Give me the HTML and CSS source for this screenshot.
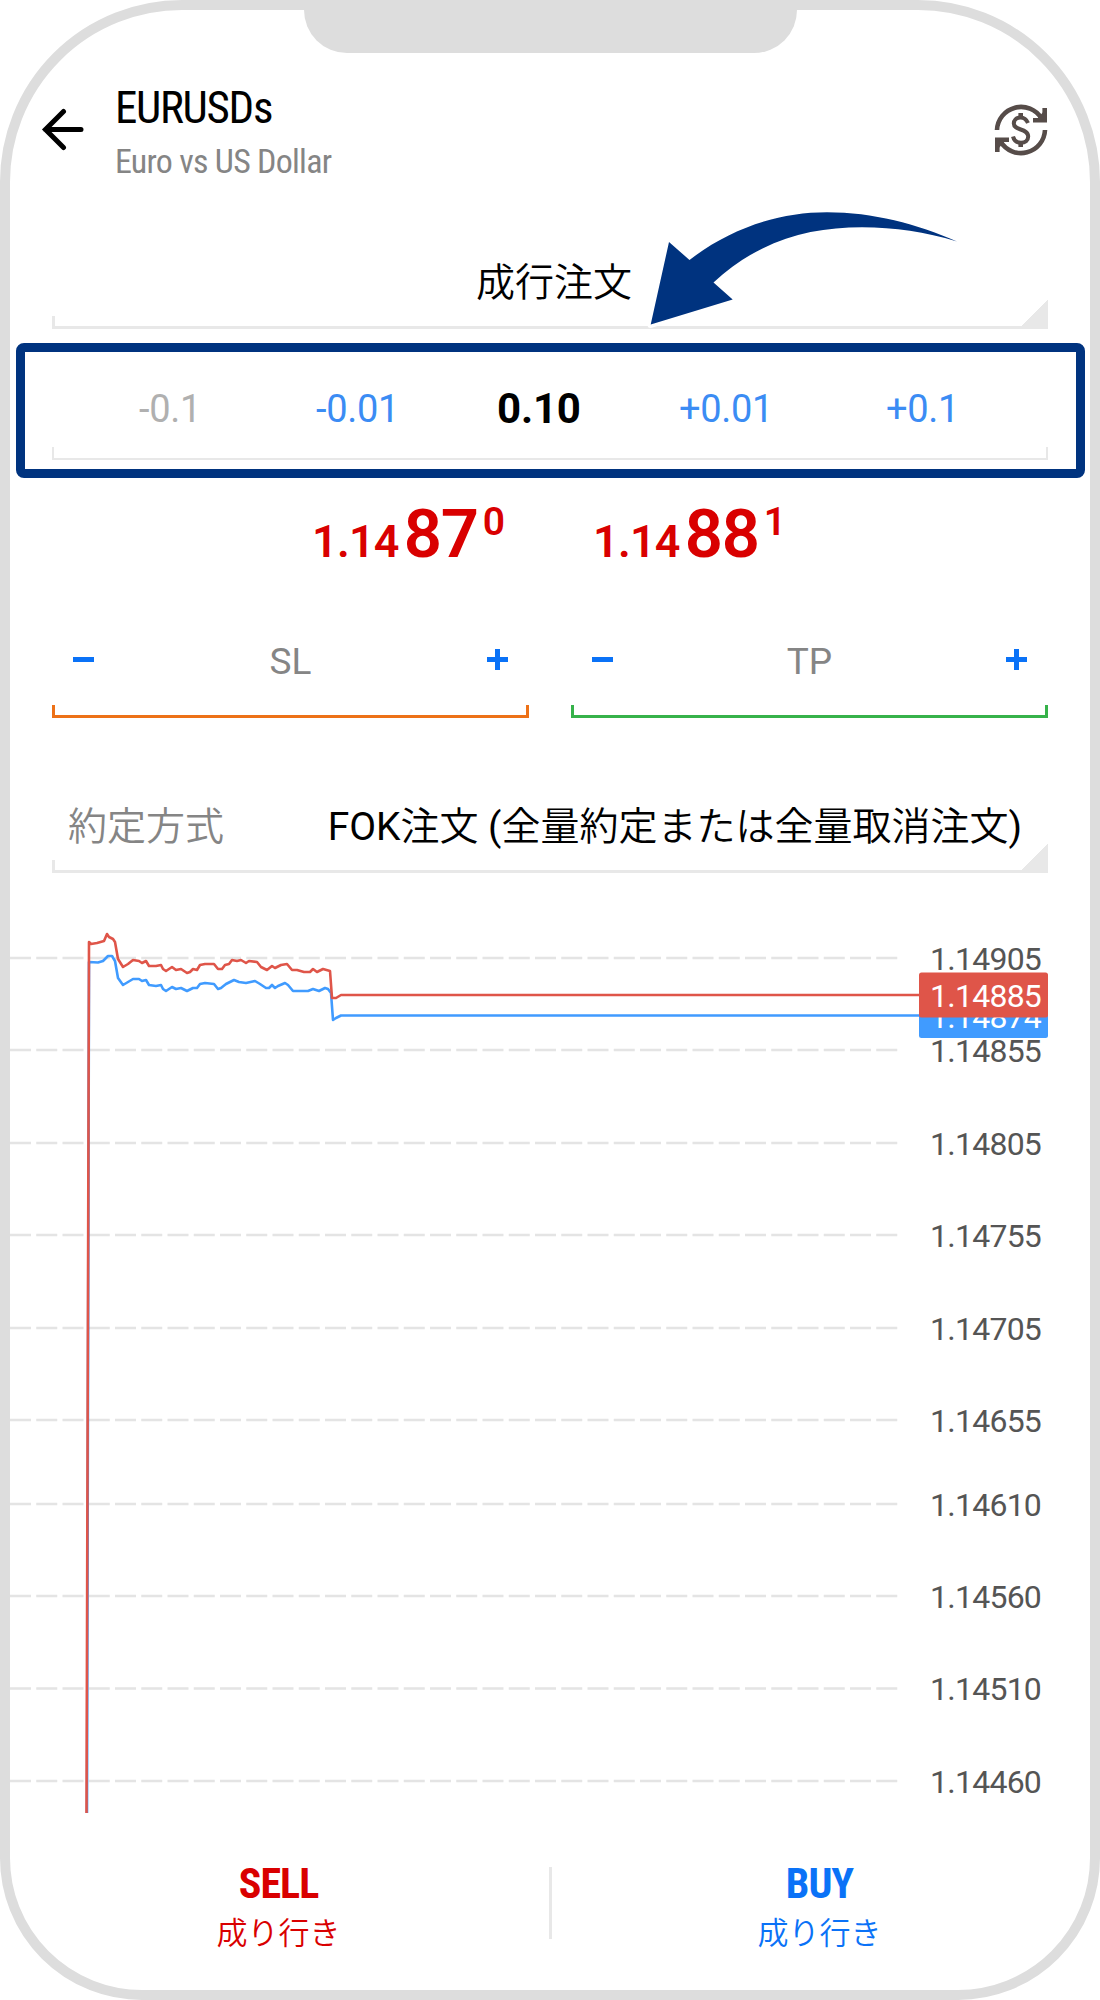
FILE: index.html
```html
<!DOCTYPE html>
<html lang="ja">
<head>
    <meta charset="UTF-8">
    <title>EURUSDs</title>
    <link rel="stylesheet" href="styles.css">
</head>
<body>
<div class="phone">
    <div class="notch"></div>

    <header class="header">
        <svg class="back" width="44" height="44" viewBox="0 0 44 44">
            <path d="M22.500 3.500 L4.500 21.500 L22.500 39.500 M4.500 21.500 H40" fill="none" stroke="#000" stroke-width="5" stroke-linecap="round"/>
        </svg>
        <div class="symbol">
            <h1>EURUSDs</h1>
            <p>Euro vs US Dollar</p>
        </div>
        <svg class="exchange" width="54" height="54" viewBox="0 0 54 54" fill="none" stroke="#564c49" stroke-width="4.6">
            <path d="M3 27 A24 24 0 0 1 47.5 15.5"/>
            <path d="M51 27 A24 24 0 0 1 6.5 38.500"/>
            <path d="M50.700 5 V17.300 H39" />
            <path d="M3.300 49 V36.700 H15"/>
            <path d="M43 16 L50 8 V17z M11 38 L4 46 V37z" fill="#564c49" stroke="none"/>
            <path d="M34 20 C32 15.500 29.500 14.500 26.500 14.500 C22 14.500 19.800 17.500 19.800 20.500 C19.800 28 34.200 25 34.200 33.500 C34.200 37.500 31 39.700 27 39.700 C23 39.700 20 37.500 19 33.500" stroke-width="4"/>
            <path d="M26.700 10 V15 M26.700 39 V44"/>
        </svg>
    </header>

    <div class="field select order-type">
        <span>成行注文</span>
    </div>

    <div class="volume">
        <div class="volume-row">
            <span class="step disabled">-0.1</span>
            <span class="step">-0.01</span>
            <span class="value">0.10</span>
            <span class="step">+0.01</span>
            <span class="step">+0.1</span>
        </div>
    </div>

    <div class="prices">
        <div class="price">1.14<b>87</b><sup>0</sup></div>
        <div class="price">1.14<b>88</b><sup>1</sup></div>
    </div>

    <div class="levels">
        <div class="level sl"><i class="minus"></i><span>SL</span><i class="plus"></i></div>
        <div class="level tp"><i class="minus"></i><span>TP</span><i class="plus"></i></div>
    </div>

    <div class="field select filling">
        <span class="label">約定方式</span>
        <span><span class="latin">FOK</span>注文 <span class="latin">(</span>全量約定または全量取消注文<span class="latin">)</span></span>
    </div>

    <svg class="chart" width="1080" height="940" viewBox="10 880 1080 940">
        <g class="grid">
            <path d="M10 958H898M10 1050H898M10 1143H898M10 1235H898M10 1328H898M10 1420H898"/>
            <path d="M10 1504H898M10 1596H898M10 1688.500H898M10 1781H898"/>
        </g>
        <g class="scale">
            <text x="930" y="970">1.14905</text>
            <text x="930" y="1062">1.14855</text>
            <text x="930" y="1155">1.14805</text>
            <text x="930" y="1247">1.14755</text>
            <text x="930" y="1340">1.14705</text>
            <text x="930" y="1432">1.14655</text>
            <text x="930" y="1516">1.14610</text>
            <text x="930" y="1608">1.14560</text>
            <text x="930" y="1700">1.14510</text>
            <text x="930" y="1793">1.14460</text>
        </g>
        <polyline class="line bid" points="87,1813 89,962 98,962.500 103,961 108,956 112,956 115,961 118,978 123,985 128,982 133,979 139,979 142,981 146,980 149,985 156,986 161,985 163,989 166,991 169,989 172,987 176,989 181,988 187,991 193,988 197,988 200,984 205,983 214,984 218,989 221,988 226,984 234,980 239,982 246,983 255,981 260,984 266,988 269,988 272,985 275,988 278,986 285,983 288,985 293,991 308,991 313,989 319,991 325,988 328,989 331,993 333,1020 336,1018 341,1015.500 920,1015.500"/>
        <polyline class="line ask" points="86.500,1813 89,942 91,944 97,943 104,941 107,934 109,937 113,939 115,942 118,959 123,967 128,964 133,960 139,961 142,963 146,961 149,966 156,966 161,965 163,969 166,971 172,967 176,970 181,969 187,973 190,972 193,969 197,970 200,965 205,964 214,964 218,969 222,969 225,965 229,964 232,960 237,961 241,960 246,963 249,961 257,962 261,967 267,970 272,966 275,968 281,965 287,964 292,970 297,970 304,972 310,972 313,969 317,972 323,969 330,971 332,998 336,998 341,995 920,995"/>
        <rect x="919" y="993" width="129" height="45" rx="2.500" fill="#409bff"/>
        <text class="tag" x="930" y="1027.500">1.14874</text>
        <rect x="919" y="972.500" width="129" height="45" rx="2.500" fill="#df5549"/>
        <text class="tag" x="930" y="1007">1.14885</text>
    </svg>

    <footer class="actions">
        <div class="action sell"><b>SELL</b><span>成り行き</span></div>
        <div class="action buy"><b>BUY</b><span>成り行き</span></div>
    </footer>

    <!-- pointer to the volume row -->
    <svg class="pointer" width="330" height="130" viewBox="640 205 330 130">
        <path d="M650.700 324.500 L669 242 L689.500 260 C732 227 780 212.300 827 212.300 C873 212.300 917 224 957 241.500 C925 232 895 227.300 862 227.300 C808 227.300 758 241 713.500 282.500 L732.700 299.500 Z" fill="#00337f" stroke="#fff" stroke-width="7" stroke-linejoin="round" paint-order="stroke"/>
    </svg>
</div>
</body>
</html>
```
FILE: styles.css
```css
* {
    box-sizing: border-box;
}

body {
    margin: 0;
    background: #fff;
    font-family: Roboto, "Noto Sans CJK JP", sans-serif;
}

.phone {
    position: relative;
    display: flex;
    flex-direction: column;
    width: 1100px;
    height: 2000px;
    border: 10px solid #ddd;
    border-radius: 182px 182px 142px 142px;
    background: #fff;
    overflow: hidden;
}

.notch {
    flex: none;
    width: 493px;
    height: 43px;
    margin: 0 auto;
    background: #ddd;
    border-radius: 0 0 46px 46px;
}

.header {
    display: flex;
    align-items: center;
    height: 154px;
    padding: 0 42px 0 31px;
}

.symbol {
    flex: 1;
    margin-left: 30px;
    padding-top: 8px;
    font-family: "Roboto Condensed", Roboto, sans-serif;
    font-stretch: 75%;
}

.symbol h1 {
    margin: 0;
    font-size: 45px;
    font-weight: 400;
    letter-spacing: -1.3px;
    line-height: 54px;
}

.symbol p {
    margin: 0;
    color: #858585;
    font-size: 34px;
    letter-spacing: -0.75px;
    line-height: 53px;
}

.field {
    display: flex;
    justify-content: center;
    position: relative;
    height: 73px;
    margin: 0 42px;
    font-size: 39px;
    font-weight: 350;
    line-height: 56px;
    white-space: nowrap;
}

/* bracket under a field: bottom line with short side ticks */
.field::before,
.volume-row::before,
.level::before {
    content: "";
    position: absolute;
    left: 0;
    right: 0;
    bottom: 0;
    height: 10px;
    border: 3px solid #e8e8e8;
    border-top: 0;
}

.select::after {
    content: "";
    position: absolute;
    right: 0;
    bottom: 0;
    width: 29px;
    height: 29px;
    background: linear-gradient(135deg, transparent 50%, #e8e8e8 50%);
}

.order-type {
    margin-top: 39px;
    padding-left: 8px;
}

.order-type.field {
    height: 83px;
    line-height: 74px;
}

.volume {
    flex: none;
    height: 135px;
    margin: 14px 5px 0 6px;
    padding: 0 28px 0 27px;
    border: 9px solid #00337f;
    border-radius: 8px;
}

.volume-row {
    position: relative;
    display: grid;
    grid-template-columns: 177px 181px 182px 207px 1fr;
    align-items: center;
    height: 108px;
    padding: 5px 0 0 87px;
}

.volume-row::before {
    height: 11px;
    border-width: 2px;
    border-top: 0;
}

.step {
    color: #3b8cf4;
    font-size: 38px;
    letter-spacing: -0.3px;
}

.disabled {
    color: #b0b0b0;
}

.value {
    font-size: 42px;
    font-weight: 700;
    letter-spacing: -0.2px;
}

.prices {
    display: flex;
    gap: 86px;
    height: 98px;
    padding-left: 302px;
    color: #d90000;
}

.price {
    width: 195px;
    font-size: 45px;
    font-weight: 650;
    letter-spacing: -0.8px;
    line-height: 112px;
    white-space: nowrap;
}

.price b {
    margin-left: 5px;
    font-size: 67px;
    font-weight: 650;
    letter-spacing: -1.3px;
}

.price sup {
    margin-left: 5px;
    font-size: 39px;
    font-weight: 600;
    line-height: 0;
    vertical-align: 22px;
}

.levels {
    display: flex;
    justify-content: space-between;
    margin: 54px 42px 0;
}

.level {
    position: relative;
    display: flex;
    justify-content: space-between;
    width: 477px;
    height: 88px;
    padding: 0 21px;
    color: #858585;
    font-size: 37px;
    line-height: 63px;
}

.sl::before {
    border-color: #ed7117;
}

.tp::before {
    border-color: #36b24a;
}

.minus,
.plus {
    width: 21px;
    height: 21px;
    margin-top: 19px;
    background: linear-gradient(#0a72f7, #0a72f7) center / 21px 5px no-repeat;
}

.plus {
    background: linear-gradient(#0a72f7, #0a72f7) center / 21px 5px no-repeat,
        linear-gradient(#0a72f7, #0a72f7) center / 5px 21px no-repeat;
}

.filling {
    justify-content: space-between;
    height: 76px;
    margin-top: 79px;
    padding: 0 26px 0 16px;
    line-height: 61px;
}

.latin {
    font-weight: 400;
}

.label {
    color: #858585;
}

.chart {
    flex: none;
    margin-top: 7px;
    font-size: 32px;
    letter-spacing: -0.75px;
}

.grid path {
    fill: none;
    stroke: #e4e4e4;
    stroke-width: 2.5;
    stroke-dasharray: 21 5.25;
}

.scale text {
    fill: #555;
}

.tag {
    fill: #fff;
}

.line {
    fill: none;
    stroke-width: 2.6;
    stroke-linejoin: round;
}

.bid {
    stroke: #409bff;
}

.ask {
    stroke: #df5549;
}

.actions {
    display: flex;
    height: 170px;
}

.action {
    display: flex;
    flex-direction: column;
    align-items: center;
    flex: 1;
    position: relative;
    padding-top: 37px;
    padding-right: 2px;
    font-size: 31px;
    font-weight: 350;
    line-height: 46px;
}

.action b {
    font-family: "Roboto Condensed", Roboto, sans-serif;
    font-stretch: 75%;
    font-size: 42px;
    letter-spacing: -1px;
    line-height: 54px;
}

.sell {
    color: #d90000;
    padding-right: 4px;
}

.buy {
    color: #0a72f7;
}

.buy::before {
    content: "";
    position: absolute;
    left: -2px;
    top: 47px;
    width: 3px;
    height: 72px;
    background: #e8e8e8;
}

.pointer {
    position: absolute;
    left: 630px;
    top: 195px;
}
```
